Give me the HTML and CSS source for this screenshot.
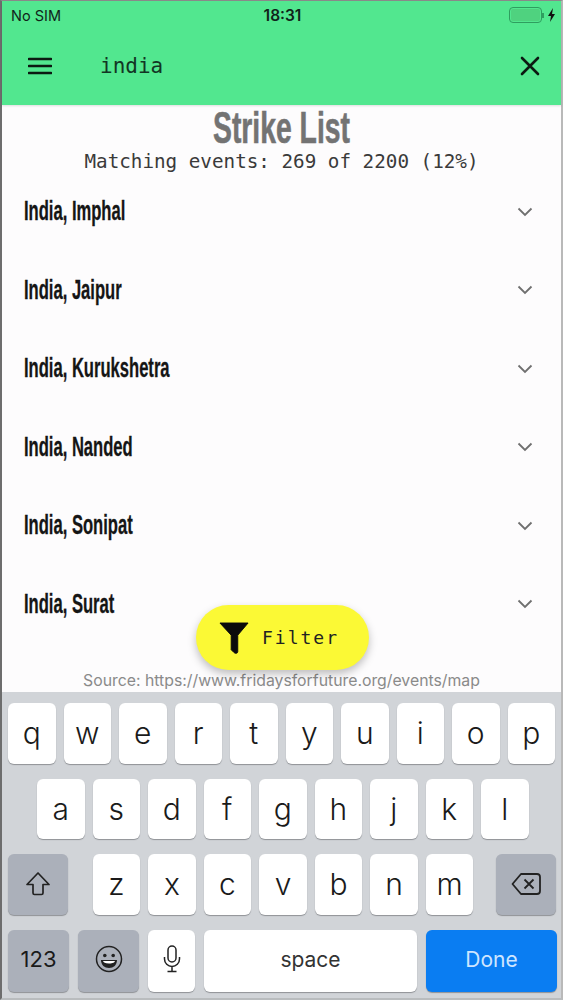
FILE: index.html
```html
<!DOCTYPE html>
<html lang="en">
<head>
<meta charset="utf-8">
<title>Strike List</title>
<link rel="stylesheet" href="styles.css">
</head>
<body>
<div class="phone">
  <header class="appbar">
    <div class="status">
      <span class="carrier">No SIM</span>
      <span class="clock">18:31</span>
      <span class="power">
        <span class="battery"><span class="battery-fill"></span></span>
        <span class="battery-tip"></span>
        <svg class="bolt" width="9" height="14" viewBox="0 0 9 14"><path d="M6 0 1 8h3l-1 6 5-8H5z" fill="#111"/></svg>
      </span>
    </div>
    <div class="toolbar">
      <svg class="menu" width="24" height="18" viewBox="0 0 24 18"><path d="M1 2h22M1 9h22M1 16h22" stroke="#0c1a12" stroke-width="2.6" stroke-linecap="round"/></svg>
      <span class="query">india</span>
      <svg class="close" width="20" height="20" viewBox="0 0 20 20"><path d="M2 2l16 16M18 2 2 18" stroke="#0c1a12" stroke-width="2.6" stroke-linecap="round"/></svg>
    </div>
  </header>
  <main class="content">
    <h1 class="title">Strike List</h1>
    <p class="matching">Matching events: 269 of 2200 (12%)</p>
    <ul class="list">
      <li class="row"><span class="place">India, Imphal</span><svg class="chev" width="16" height="10" viewBox="0 0 16 10"><path d="M1.5 1.5 8 8l6.5-6.5" fill="none" stroke="#6f6f6f" stroke-width="1.8"/></svg></li>
      <li class="row"><span class="place">India, Jaipur</span><svg class="chev" width="16" height="10" viewBox="0 0 16 10"><path d="M1.5 1.5 8 8l6.5-6.5" fill="none" stroke="#6f6f6f" stroke-width="1.8"/></svg></li>
      <li class="row"><span class="place">India, Kurukshetra</span><svg class="chev" width="16" height="10" viewBox="0 0 16 10"><path d="M1.5 1.5 8 8l6.5-6.5" fill="none" stroke="#6f6f6f" stroke-width="1.8"/></svg></li>
      <li class="row"><span class="place">India, Nanded</span><svg class="chev" width="16" height="10" viewBox="0 0 16 10"><path d="M1.5 1.5 8 8l6.5-6.5" fill="none" stroke="#6f6f6f" stroke-width="1.8"/></svg></li>
      <li class="row"><span class="place">India, Sonipat</span><svg class="chev" width="16" height="10" viewBox="0 0 16 10"><path d="M1.5 1.5 8 8l6.5-6.5" fill="none" stroke="#6f6f6f" stroke-width="1.8"/></svg></li>
      <li class="row"><span class="place">India, Surat</span><svg class="chev" width="16" height="10" viewBox="0 0 16 10"><path d="M1.5 1.5 8 8l6.5-6.5" fill="none" stroke="#6f6f6f" stroke-width="1.8"/></svg></li>
    </ul>
    <p class="source">Source: https://www.fridaysforfuture.org/events/map</p>
    <button class="fab">
      <svg width="30" height="34" viewBox="0 0 32 34"><path d="M1 1h30L20 14v17.500c0 2-2.500 2.500-4 1l-3-3V14z" fill="#0b0b0b" stroke="#0b0b0b" stroke-linejoin="round"/></svg>
      <span>Filter</span>
    </button>
  </main>
  <section class="keyboard">
    <div class="keys keys-top">
      <span class="key">q</span><span class="key">w</span><span class="key">e</span><span class="key">r</span><span class="key">t</span><span class="key">y</span><span class="key">u</span><span class="key">i</span><span class="key">o</span><span class="key">p</span>
    </div>
    <div class="keys keys-mid">
      <span class="key">a</span><span class="key">s</span><span class="key">d</span><span class="key">f</span><span class="key">g</span><span class="key">h</span><span class="key">j</span><span class="key">k</span><span class="key">l</span>
    </div>
    <div class="keys keys-low">
      <span class="key key-dark key-side">
        <svg width="26" height="26" viewBox="0 0 26 26"><path d="M13 2 2 13.500h6V22a1.500 1.500 0 0 0 1.500 1.500h7A1.500 1.500 0 0 0 18 22v-8.500h6z" fill="none" stroke="#222" stroke-width="1.700" stroke-linejoin="round"/></svg>
      </span>
      <span class="letters">
        <span class="key">z</span><span class="key">x</span><span class="key">c</span><span class="key">v</span><span class="key">b</span><span class="key">n</span><span class="key">m</span>
      </span>
      <span class="key key-dark key-side">
        <svg width="30" height="24" viewBox="0 0 30 24"><path d="M10 2h16a3 3 0 0 1 3 3v14a3 3 0 0 1-3 3H10L1.500 12z" fill="none" stroke="#222" stroke-width="1.800" stroke-linejoin="round"/><path d="M13.500 7.500l9 9M22.500 7.500l-9 9" stroke="#222" stroke-width="1.800"/></svg>
      </span>
    </div>
    <div class="keys keys-bottom">
      <span class="key key-dark key-num">123</span>
      <span class="key key-dark key-emoji">
        <svg width="28" height="28" viewBox="0 0 28 28"><circle cx="14" cy="14" r="12.500" fill="none" stroke="#222" stroke-width="1.500"/><circle cx="9.800" cy="10.500" r="1.800" fill="#222"/><circle cx="18.200" cy="10.500" r="1.800" fill="#222"/><path d="M6 15h16c0 5-3.500 8-8 8s-8-3-8-8z" fill="#222"/><path d="M8 16h12c-.5 1.500-2 2.500-6 2.500S8.500 17.500 8 16z" fill="#fff"/></svg>
      </span>
      <span class="key key-mic">
        <svg width="18" height="28" viewBox="0 0 18 28"><rect x="5" y="1" width="8" height="16" rx="4" fill="none" stroke="#222" stroke-width="1.500"/><path d="M1.500 12v2a7.500 7.500 0 0 0 15 0v-2M9 21.500V26M4.500 26.500h9" fill="none" stroke="#222" stroke-width="1.500"/></svg>
      </span>
      <span class="key key-space">space</span>
      <span class="key key-done">Done</span>
    </div>
  </section>
</div>
</body>
</html>
```
FILE: styles.css
```css
* { box-sizing: border-box; }
html, body { margin: 0; padding: 0; }
body { width: 563px; height: 1000px; overflow: hidden; background: #fff; }

.phone {
  width: 563px;
  height: 1000px;
  display: flex;
  flex-direction: column;
  background: #fdfcfd;
  border-top: 1px solid #8b8b8b;
  border-left: 2px solid #6d6d6d;
  border-right: 2px solid #b9b9b9;
  border-bottom: 2px solid #b9bcbe;
  font-family: Inter, "Liberation Sans", sans-serif;
}

.appbar { height: 104px; background: #52e78f; flex: none; box-shadow: 0 1px 2px rgba(0,0,0,.12); position: relative; z-index: 2; }
.status { height: 28px; display: grid; grid-template-columns: 1fr auto 1fr; align-items: center; padding: 0 5px 0 9px; font-size: 14.500px; color: #10241a; }
.carrier { justify-self: start; }
.clock { font-weight: 600; font-size: 15.500px; margin-right: 2px; }
.power { justify-self: end; display: flex; align-items: center; }
.battery { width: 33px; height: 16px; border: 1px solid #2f9e5f; border-radius: 4px; padding: 1px; display: block; }
.battery-fill { display: block; width: 100%; height: 100%; border-radius: 2px; background: #4fd27f; }
.battery-tip { width: 2px; height: 5px; background: #2f9e5f; margin-right: 3px; }

.toolbar { height: 76px; display: flex; align-items: center; padding: 0 21px 3px 26px; }
.query { font-family: "DejaVu Sans Mono", monospace; font-size: 21px; color: #123524; margin-left: 48px; flex: 1; }

.content { flex: 1; min-height: 0; position: relative; text-align: center; }
.title {
  margin: -2px 0 -4px;
  font-family: "Liberation Sans Narrow", "Liberation Sans", sans-serif;
  font-size: 44px;
  line-height: 50px;
  font-weight: 700;
  color: #737373;
  transform: scaleX(.644);
  -webkit-text-stroke: .6px #737373;
}
.matching { margin: 1px 0 0; font-family: "DejaVu Sans Mono", monospace; font-size: 19.250px; line-height: 24px; color: #3a3a3a; }

.list { list-style: none; margin: 18px 0 0; padding: 0 28px 0 22px; }
.row { height: 78.500px; display: flex; justify-content: space-between; align-items: flex-start; padding-top: 4px; }
.place {
  font-family: "Liberation Sans Narrow", "Liberation Sans", sans-serif;
  font-size: 27px;
  line-height: 30px;
  font-weight: 700;
  color: #151515;
  transform: scaleX(.614);
  transform-origin: left center;
  -webkit-text-stroke: .3px #151515;
}
.chev { margin-top: 10.500px; }

.source { position: absolute; left: 0; right: 0; bottom: 0; margin: 0; padding-bottom: 3px; font-size: 15.800px; line-height: 17px; height: 20px; color: #8a8a8a; }

.fab {
  position: absolute;
  left: 194px;
  top: 500px;
  width: 173px;
  height: 65px;
  border: 0;
  border-radius: 33px;
  background: #fbf935;
  box-shadow: 0 4px 8px rgba(0,0,0,.25);
  display: flex;
  align-items: center;
  padding: 0 0 0 23px;
  gap: 13px;
  font-family: "DejaVu Sans Mono", monospace;
  font-size: 18px;
  letter-spacing: 2px;
  color: #222;
}

.keyboard { flex: none; height: 306px; background: #d1d4d8; padding: 11px 0 0 6px; }
.keys { display: flex; gap: 8px; height: 60.500px; margin-bottom: 15px; }
.key {
  display: flex;
  align-items: center;
  justify-content: center;
  background: #fff;
  border-radius: 6px;
  box-shadow: 0 1px 1px #8f9296;
  font-size: 30px;
  font-weight: 300;
  color: #1a1a1a;
}
.keys-top .key { width: 47.500px; }
.keys-mid { padding-left: 29px; }
.keys-mid .key { width: 47.500px; }
.keys-low { justify-content: space-between; padding-right: 5px; }
.letters { display: flex; gap: 8px; margin-left: 2px; }
.letters .key { width: 47.500px; }
.key-dark { background: #abb0ba; }
.key-side { width: 60px; }
.keys-bottom { gap: 9px; margin-bottom: 0; height: 62px; }
.keys-bottom .key { padding-bottom: 3px; }
.key-num { width: 61px; font-size: 22px; font-weight: 400; }
.key-emoji { width: 61px; }
.key-mic { width: 47px; }
.key-space { width: 213px; font-size: 21px; font-weight: 400; color: #333; }
.key-done { width: 131px; background: #0a7df2; color: #cfe6ff; font-size: 21px; font-weight: 400; }
```
